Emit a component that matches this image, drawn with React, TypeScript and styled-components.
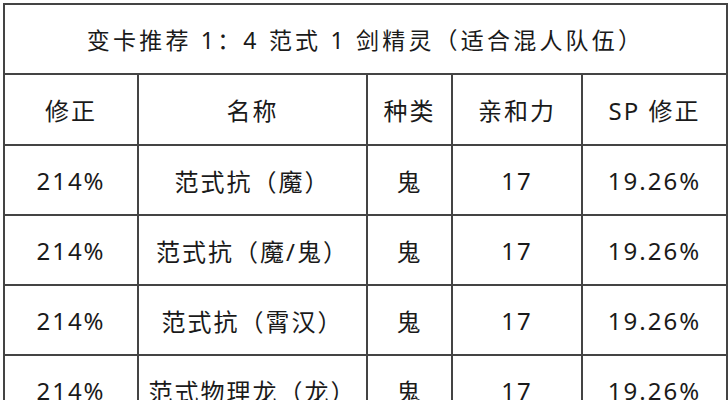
import React from "react";
import styled, { createGlobalStyle } from "styled-components";

const Global = createGlobalStyle`
  html, body { margin: 0; padding: 0; background: #ffffff; }
  body { padding: 3px 0 0 3px; font-family: "Noto Sans", "Noto Sans CJK SC", sans-serif; color: #1a1a1a; }
`;

const Table = styled.table`
  border-collapse: collapse;
  width: 723px;
  table-layout: fixed;
`;

const Col = styled.col<{ $w: number }>`
  width: ${(p) => p.$w}px;
`;

const TitleCell = styled.th`
  height: 68px;
  border: 2px solid #444;
  font-size: 23px;
  font-weight: 400;
  letter-spacing: 3.2px;
  text-align: center;
  vertical-align: middle;
  padding: 0;
`;

const HeadCell = styled.th`
  height: 69px;
  border: 2px solid #444;
  font-size: 24px;
  font-weight: 400;
  letter-spacing: 2px;
  text-align: center;
  vertical-align: middle;
  padding: 0;
`;

const Cell = styled.td`
  height: 68px;
  border: 2px solid #444;
  font-size: 24px;
  letter-spacing: 2px;
  text-align: center;
  vertical-align: middle;
  padding: 0;
`;

const rows = [
  { fix: "214%", name: "范式抗（魔）", kind: "鬼", aff: "17", sp: "19.26%" },
  { fix: "214%", name: "范式抗（魔/鬼）", kind: "鬼", aff: "17", sp: "19.26%" },
  { fix: "214%", name: "范式抗（霄汉）", kind: "鬼", aff: "17", sp: "19.26%" },
  { fix: "214%", name: "范式物理龙（龙）", kind: "鬼", aff: "17", sp: "19.26%" },
];

export default function App() {
  return (
    <>
      <Global />
      <Table>
        <colgroup>
          <Col $w={134} />
          <Col $w={229} />
          <Col $w={85} />
          <Col $w={130} />
          <Col $w={145} />
        </colgroup>
        <thead>
          <tr>
            <TitleCell colSpan={5}>变卡推荐 1：4 范式 1 剑精灵（适合混人队伍）</TitleCell>
          </tr>
          <tr>
            <HeadCell>修正</HeadCell>
            <HeadCell>名称</HeadCell>
            <HeadCell>种类</HeadCell>
            <HeadCell>亲和力</HeadCell>
            <HeadCell>SP 修正</HeadCell>
          </tr>
        </thead>
        <tbody>
          {rows.map((r, i) => (
            <tr key={i}>
              <Cell>{r.fix}</Cell>
              <Cell>{r.name}</Cell>
              <Cell>{r.kind}</Cell>
              <Cell>{r.aff}</Cell>
              <Cell>{r.sp}</Cell>
            </tr>
          ))}
        </tbody>
      </Table>
    </>
  );
}
